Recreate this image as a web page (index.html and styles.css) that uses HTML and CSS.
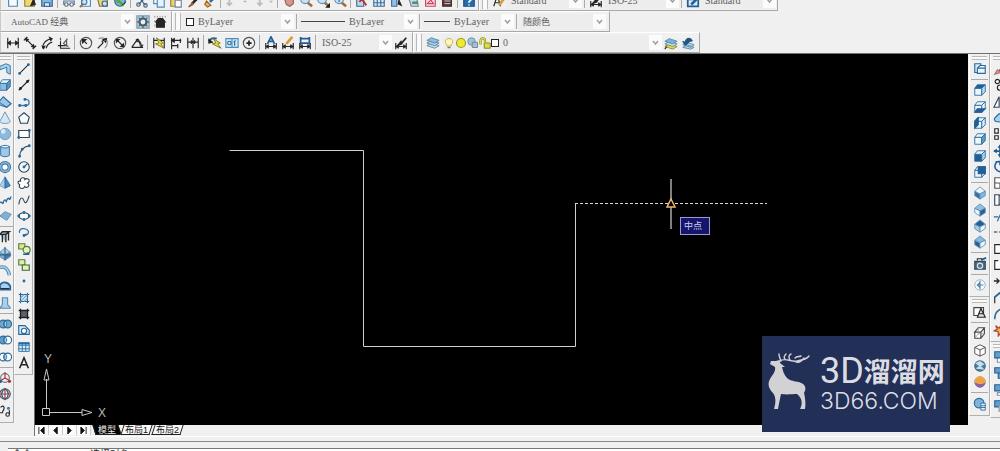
FILE: index.html
```html
<!DOCTYPE html>
<html lang="zh-CN">
<head>
<meta charset="utf-8">
<title>AutoCAD 经典</title>
<link rel="stylesheet" href="styles.css">
</head>
<body>
<header class="bars">
  <div class="bar-row bar-row-top">
    <div class="bar bar-first" data-tools="new open save | plot preview publish globe | cut copy paste brush match | undo more redo more | pan zoom zoomwin zoomprev | props center palette sheet markup calc | help"></div>
    <div class="bar">
      <i class="grip"></i>
      <span class="tools" data-tools="textstyle"></span>
      <span class="combo combo-style"><select aria-label="文字样式"><option>Standard</option></select></span>
      <i class="sep"></i>
      <span class="tools" data-tools="dimbrush"></span>
      <span class="combo combo-style"><select aria-label="标注样式"><option>ISO-25</option></select></span>
      <i class="sep"></i>
      <span class="tools" data-tools="tablestyle"></span>
      <span class="combo combo-style"><select aria-label="表格样式"><option>Standard</option></select></span>
    </div>
  </div>
  <div class="bar-row">
    <div class="bar bar-first">
      <span class="combo combo-space"><select aria-label="工作空间"><option>AutoCAD 经典</option></select></span>
      <span class="tools" data-tools="gear house"></span>
    </div>
    <div class="bar">
      <i class="grip"></i>
      <span class="combo combo-color"><i class="swatch"></i><select aria-label="颜色"><option>ByLayer</option></select></span>
      <i class="sep"></i>
      <span class="combo combo-line"><i class="sample sample-long"></i><select aria-label="线型"><option>ByLayer</option></select></span>
      <i class="sep"></i>
      <span class="combo combo-weight"><i class="sample"></i><select aria-label="线宽"><option>ByLayer</option></select></span>
      <i class="sep"></i>
      <span class="combo combo-plot"><select aria-label="打印样式"><option>随颜色</option></select></span>
    </div>
  </div>
  <div class="bar-row">
    <div class="bar bar-first">
      <span class="tools" data-tools="dimlin dimali dimarc dimord | dimrad dimjog dimdia dimang | quick baseline continue | tolerance frame centermark | dimedit dimtext dimupdate |"></span>
      <span class="combo combo-dim"><select aria-label="当前标注样式"><option>ISO-25</option></select></span>
      <span class="tools" data-tools="dimbrush"></span>
    </div>
    <div class="bar">
      <i class="grip"></i>
      <span class="tools" data-tools="layers"></span>
      <span class="combo combo-layer"><span class="states" data-icons="bulb sun freeze lock"></span><i class="swatch"></i><select aria-label="图层"><option>0</option></select></span>
      <span class="tools" data-tools="laycur layprev"></span>
    </div>
  </div>
</header>

<main class="work">
  <div class="dock dock-left-a">
    <div class="vbar"><i class="vgrip"></i><div data-tools="polysolid box wedge cone sphere cylinder torus pyramid helix plane | extrude presspull sweep revolve loft | union subtract intersect | move3d rotate3d align3d"></div></div>
  </div>
  <div class="dock dock-left-b">
    <div class="vbar"><i class="vgrip"></i><div data-tools="line xline pline polygon rect arc circle cloud spline ellipse ellarc insert block point hatch gradient region table mtext"></div></div>
  </div>
  <section class="view">
    <div class="canvas">
      <svg class="drawing" aria-label="图形">
        <path d="M194.500 96.500H328.500V292.500H540.500V149.500" fill="none" stroke="#d0d0d0"/>
        <path d="M540 149.500H732" stroke="#d8d8d8" stroke-dasharray="3 2"/>
        <path d="M636 125V175" stroke="#808080" stroke-width="2"/>
        <path d="M636 145L640 153H632Z" fill="#000" stroke="#f2b66c" stroke-width="1.500"/>
      </svg>
      <svg class="ucs" viewBox="0 0 70 70" aria-label="UCS">
        <path d="M4.500 57.500h7v7h-7zM8.500 57V28M12 61.500H44M8.500 18L11 29H6ZM54 61.500L44 58.500V64.500Z" fill="none" stroke="#c8c8c8"/>
        <text x="6" y="12">Y</text><text x="60" y="66">X</text>
      </svg>
      <span class="snap-tip">中点</span>
    </div>
    <nav class="tabs">
      <button class="nav-btn" aria-label="第一个"><svg viewBox="0 0 10 8"><path d="M2 0v8M8 0L4 4L8 8Z"/></svg></button>
      <button class="nav-btn" aria-label="上一个"><svg viewBox="0 0 10 8"><path d="M7 0L3 4L7 8Z"/></svg></button>
      <button class="nav-btn" aria-label="下一个"><svg viewBox="0 0 10 8"><path d="M3 0L7 4L3 8Z"/></svg></button>
      <button class="nav-btn" aria-label="最后一个"><svg viewBox="0 0 10 8"><path d="M8 0v8M2 0L6 4L2 8Z"/></svg></button>
      <span class="tab-list"><button class="tab tab-on">模型</button><button class="tab">布局1</button><button class="tab">布局2</button></span>
    </nav>
    <aside class="brand">
      <svg class="deer" viewBox="0 0 42 58" aria-hidden="true">
        <path fill="#d2d2d4" d="M12 7C9 8 6 8 3 8L2 11L7 14C8 19 4 22 2 26C-1 31 1 36 5 40C8 44 8 49 6 56H10C11 50 12 46 13 41C19 42 25 41 29 41C34 45 35 50 32 56H37C38 50 37 44 36 40C38 37 38 33 35 31C31 28 23 29 19 25C16 22 15 18 14 14L17 14L12 10Z"/>
        <path fill="none" stroke="#d2d2d4" stroke-width="1.400" stroke-linecap="round" d="M12 8C17 4 22 9 29 8C35 7 39 6 41 3M13 8C12 5 11 4 11 1M17 6C15 4 17 2 18 1M22 7C20 4 21 2 23 1M27 5C29 3 31 4 33 3M26 8C30 11 34 8 36 5"/>
      </svg>
      <div class="brand-text">
        <div class="brand-name"><span class="brand-latin">3D</span>溜溜网</div>
        <div class="brand-site">3D66.COM</div>
      </div>
    </aside>
  </section>
  <div class="dock dock-right-a">
    <div class="vbar"><i class="vgrip"></i><div data-tools="named | vtop vbottom vleft vright vfront vback | isw ise ine inw | camera | previous"></div></div>
    <div class="vbar"><i class="vgrip"></i><div data-tools="wire2d | wire3d hidden realistic conceptual | styles"></div></div>
  </div>
  <div class="dock dock-right-b">
    <div class="vbar"><i class="vgrip"></i><div data-tools="erase copyobj mirror offset array move rotate scale stretch trim extend break1 break2 join chamfer fillet explode"></div></div>
    <div class="vbar"><i class="vgrip"></i><div data-tools="front back above below"></div></div>
  </div>
</main>

<footer class="command">
  <div class="command-line"><span>命令</span><span>选择对象</span></div>
</footer>
<script src="app.js"></script>
</body>
</html>
```

FILE: styles.css
```css
* { box-sizing: border-box; }

body {
  margin: 0;
  min-height: 100vh;
  display: flex;
  flex-direction: column;
  overflow: hidden;
  background: #f0f0f0;
  color: #606060;
  font: 10px/12px "Liberation Serif", "Noto Sans CJK SC", serif;
}

button, select {
  margin: 0;
  padding: 0;
  border: 0;
  background: none;
  color: inherit;
  font: inherit;
}

svg { display: block; }

/* horizontal toolbars */
.bars { border-bottom: 1px solid #707070; }
.bar-row { display: flex; height: 21px; align-items: stretch; }
.bar-row-top { height: 11px; align-items: flex-end; overflow: hidden; }
.bar {
  display: flex;
  align-items: center;
  height: 21px;
  flex: none;
  padding: 0 3px 0 1px;
  border: 1px solid;
  border-color: #fff #a8a8a8 #a8a8a8 #fff;
}
.bar-first { padding-left: 3px; border-left-color: #c8c8c8; }
.bar-row-top .bar { padding-right: 1px; }
.tools { display: flex; align-items: center; }
.tool {
  display: flex;
  flex: none;
  align-items: center;
  justify-content: center;
  width: 17px;
  height: 16px;
}
.tool svg { width: 14px; height: 14px; }
.tool-more { width: 9px; }
.tool-more svg { width: 8px; }
.sep {
  flex: none;
  width: 1px;
  height: 15px;
  margin: 0 2px;
  background: #aaa;
}
.grip {
  flex: none;
  width: 6px;
  height: 17px;
  margin: 0 2px 0 1px;
  border: solid #b8b8b8;
  border-width: 0 1px;
  background: #fafafa;
}

.combo {
  display: flex;
  align-items: center;
  height: 16px;
  background: #ededed;
}
.combo select {
  flex: 1;
  min-width: 0;
  height: 16px;
  padding: 0 14px 0 4px;
  appearance: none;
  outline: 0;
}
.combo .chevron {
  width: 13px;
  height: 15px;
  margin-left: -13px;
  background: #fbfbfb;
  pointer-events: none;
}
.combo-style { width: 75px; }
.combo-space { width: 130px; font-size: 9px; }
.combo-space select { padding-left: 7px; }
.combo-color { width: 111px; }
.combo-line { width: 118px; }
.combo-weight { width: 92px; }
.combo-plot { width: 87px; font-size: 9px; }
.combo-dim { width: 74px; }
.combo-layer { width: 219px; margin-left: 2px; }
.swatch {
  flex: none;
  width: 8px;
  height: 8px;
  margin-left: 3px;
  border: 1px solid #222;
  background: #fff;
}
.combo-layer .swatch { margin-left: 0; }
.sample { flex: none; width: 26px; height: 1px; margin-left: 2px; background: #444; }
.sample-long { width: 44px; }
.states { display: flex; }
.states svg { width: 12px; height: 12px; }

/* docked toolbars */
.work { display: flex; flex: 1; }
.dock { flex: none; overflow: hidden; }
.dock-left-a { display: flex; justify-content: flex-end; align-items: flex-start; width: 14px; }
.dock-left-b { width: 20px; }
.dock-right-a { width: 22px; }
.dock-right-b { width: 10px; }
.vbar {
  width: 19px;
  padding: 2px 0 3px;
  border: solid;
  border-width: 0 1px 1px 1px;
  border-color: #fff #b0b0b0 #b0b0b0 #fff;
}
.dock-right-a .vbar { margin-left: 1px; width: 21px; }
.vgrip {
  display: block;
  height: 4px;
  margin: 0 2px 1px;
  border: solid #b8b8b8;
  border-width: 1px 0;
  background: #fafafa;
}
.vbar > div { display: flex; flex-direction: column; align-items: center; }
.vbar .tool:nth-of-type(3n) { height: 17px; }
.vbar .sep { width: 17px; height: 1px; margin: 2px 0; }

/* drawing area */
.view {
  position: relative;
  display: flex;
  flex: 1;
  flex-direction: column;
  min-width: 0;
  border-left: 1px solid #707070;
}
.canvas { position: relative; flex: 1; overflow: hidden; background: #000; }
.drawing { width: 100%; height: 100%; position: absolute; }
.ucs { position: absolute; left: 3px; bottom: 4px; width: 70px; height: 70px; }
.ucs text { fill: #b8b8b8; font: 12px "Liberation Sans", sans-serif; }
.snap-tip {
  position: absolute;
  left: 645px;
  top: 163px;
  padding: 2px 7px 2px 3px;
  border: 1px solid #9a9ad0;
  background: #15156b;
  color: #d0d0f0;
  font-size: 9px;
}

.tabs { display: flex; align-items: stretch; height: 11px; padding-bottom: 1px; color: #111; }
.tab-list { display: flex; padding-left: 2px; }
.nav-btn {
  display: flex;
  align-items: center;
  justify-content: center;
  width: 14px;
  border-right: 1px solid #ccc;
  background: #fafafa;
}
.nav-btn svg { width: 9px; height: 7px; fill: #111; stroke: #111; }
.tab {
  position: relative;
  z-index: 0;
  width: 31px;
  font: 9px/10px "Liberation Sans", "Noto Sans CJK SC", sans-serif;
}
.tab-on { width: 28px; color: #eee; }
.tab::before {
  content: "";
  position: absolute;
  z-index: -1;
  inset: 0 1px;
  border: 1px solid #222;
  border-top: 0;
  background: #f8f8f8;
  transform: skewX(-18deg);
}
.tab-on::before { background: #000; transform: skewX(18deg); }

.brand {
  position: absolute;
  right: 18px;
  bottom: 4px;
  display: flex;
  gap: 10px;
  width: 188px;
  height: 96px;
  padding: 17px 4px 0 6px;
  background: #222f57;
  color: #dcdde2;
}
.deer { flex: none; width: 42px; height: 58px; }
.brand-text { white-space: nowrap; }
.brand-name { display: flex; align-items: center; height: 36px; font: 700 27px/36px "Noto Sans CJK SC", sans-serif; }
.brand-latin { font: 36px/36px Roboto, sans-serif; }
.brand-site { font: 300 23px/24px Inter, sans-serif; }

/* command window */
.command { flex: none; height: 15px; border-top: 1px solid #fff; overflow: hidden; }
.command::before { content: ""; display: block; height: 1px; margin-top: 4px; background: #888; }
.command-line {
  display: flex;
  gap: 58px;
  margin: 6px 0 0 8px;
  padding-left: 4px;
  border-top: 1px solid #777;
  background: #fff;
  color: #333;
  line-height: 12px;
}
```

FILE: app.js
```js
const K = '#252525', B = '#276a9f', L = '#a9d0ec', D = '#235f96', W = '#eef6fc', Y = '#e8df3c', G = '#8b9298';

const p = (d, stroke = K, fill = 'none', w = 1.3) =>
  `<path d="${d}" stroke="${stroke}" fill="${fill}" stroke-width="${w}"/>`;
const c = (x, y, r, stroke = K, fill = 'none', w = 1.3) =>
  `<circle cx="${x}" cy="${y}" r="${r}" stroke="${stroke}" fill="${fill}" stroke-width="${w}"/>`;
const dots = (...xy) => xy.map(([x, y]) => c(x, y, 1, B, B)).join('');
const cube = (front, top, side) =>
  p('M2 6H10V14H2Z', B, front, 1) + p('M2 6L5 2H14L10 6Z', B, top, 1) + p('M10 6L14 2V10L10 14Z', B, side, 1);
const iso = (left, top, right) =>
  p('M2 6L8 9V15L2 11Z', '#5f8fb8', left, 1) + p('M8 1L14 6L8 9L2 6Z', '#5f8fb8', top, 1) + p('M14 6L8 9V15L14 11Z', '#5f8fb8', right, 1);
const page = p('M3 1H13V14H3Z', '#4f86b3', '#f4faff');
const lens = c(7, 6, 5, '#6d8fae', '#c5e2f6') + p('M10 10L15 14', '#a06c3c', 'none', 3);
const dimBase = p('M2 8V15M14 8V15M2 12H14', K) + p('M2 12L5 10V14ZM14 12L11 10V14Z', K, K, 1);
const rings = (a, b) => c(6, 8, 4.5, B, a) + c(11, 8, 4.5, B, b) + p('M8.500 4.500C10.500 7 10.500 9 8.500 11.500C6.500 9 6.500 7 8.500 4.500Z', B, L, 1);

const icons = {
  new: page,
  open: p('M2 5H13V14H2Z', '#9b8530', '#efd871') + p('M12 6L9 13L14 12Z', K, K),
  save: p('M2 2H14V14H2Z', '#315f90', '#83b8df') + p('M5 10H11V14H5Z', '#315f90', '#e0eefa'),
  plot: p('M2 8H14V12H2Z', '#64788f', '#dce7f0') + c(5, 12, 2, '#51677f', '#fff') + c(11, 12, 2, '#51677f', '#fff'),
  preview: page + c(6, 9, 3, '#4b779d', '#c5e2f6') + p('M4 12L1 15', '#99683b', 'none', 2),
  publish: p('M2 6H13V14H4Z', '#8a7835', '#ead579') + c(10, 11, 3, '#3d6892', '#c2dff4'),
  globe: c(8, 8, 6, '#2b6392', '#76b7df') + p('M4 9C8 6 9 12 12 13', '#5ea33e', 'none', 3) + p('M10 13L15 9', K, 'none', 1),
  cut: p('M3 2L12 13M13 3L4 12', '#3e617e') + c(4, 12, 2, '#3e617e') + c(12, 13, 2, '#3e617e'),
  copy: p('M2 2H9V11H2Z', '#5688b2', '#f6fbff') + p('M6 5H14V15H6Z', '#5688b2', '#e4f3ff'),
  paste: p('M2 3H12V14H2Z', '#92803a', '#e9d374') + p('M7 7H14V15H7Z', '#708395', '#fff'),
  brush: p('M14 4L7 11', K, 'none', 3) + p('M7 10L3 15L8 12Z', '#a05a27', '#c57e45'),
  match: p('M14 3L8 9', B, 'none', 3) + p('M4 8L9 13L5 15L2 12Z', '#9a6828', '#edb34e'),
  undo: p('M5 6V13M2 10L5 13L8 10', '#bcbcbc', 'none', 2),
  redo: p('M10 6V13M7 10L10 13L13 10', '#bcbcbc', 'none', 2),
  more: p('M5 8H11L8 11Z', '#b8b8b8', '#b8b8b8'),
  pan: p('M3 6L5 12L9 14L13 11V7L10 5L5 3Z', '#9c625a', '#d4978f'),
  zoom: lens, zoomwin: lens + p('M12 15H16V11Z', K, K), zoomprev: lens + p('M4 6H10M7 3V9', B),
  props: p('M2 4H10V14H2Z', '#46688e', '#bdd8ec') + p('M5 9L8 6L13 13', '#ad342b', 'none', 2),
  center: p('M2 2H14V14H2ZM2 6H14M2 10H14M6 2V14M10 2V14', '#426b92', '#d7ebfa'),
  palette: p('M3 2H9V14H3Z', '#426b92', '#8fc0e5') + p('M11 6L14 13L10 11', K, K),
  sheet: p('M3 4H12L14 14H6Z', '#70879a', '#c5ddea') + p('M7 10H14', '#5c8e6a', 'none', 3),
  markup: p('M3 3H14V14H3Z', '#cc4161', '#f9dfe5') + p('M5 11L9 7L12 11Z', '#cc4161'),
  calc: p('M3 2H13V14H3Z', '#442a2a', '#573838') + p('M5 8H12M5 11H12', '#ddd', 'none', 1),
  help: p('M2 2H14V14H2Z', '#164f88', '#246cac') + p('M6 5C7 3 11 4 10 7L8 9V10M8 12V13', '#fff', 'none', 2),
  textstyle: p('M2 14L6 2L10 14M4 10H9', K) + p('M14 5L8 13', '#d59e3b', 'none', 3),
  tablestyle: p('M2 2H14V14H2ZM2 6H14', D, '#d8ebfa', 2) + p('M13 5L6 12', D, 'none', 3),
  gear: p('M1 1H15V15H1Z', '#7898aa', '#bcd2df') + c(8, 8, 4, '#475d6d', '#e8eef1', 2.500) + p('M8 1V4M8 12V15M1 8H4M12 8H15M3 3L5 5M11 11L13 13M3 13L5 11M11 5L13 3', '#475d6d'),
  house: p('M2 1V3M5 1V3M8 1V3M11 1V3M14 1V3M2 6V8M2 11V13', '#888', 'none', 1) + p('M3 8L6 4H11L14 8H13V14H4V8Z', K, K),
  dimlin: p('M2 2V14M14 2V14M2 8H14') + p('M2 8L5 6V10ZM14 8L11 6V10Z', K, K),
  dimali: p('M5 1L1 5M15 11L11 15M3 3L13 13', K, 'none', 1.500) + p('M3 3L6 4L4 6ZM13 13L10 12L12 10Z', K, K),
  dimarc: p('M3 14C3 8 7 4 14 3M7 14C8 10 10 8 14 7', K) + p('M2 11L4 15L6 11M10 1L14 3L12 6', K, K, 1),
  dimord: p('M4 6V14H15M1 11H10', K) + p('M4 2V5M7 9L12 3M8 9L13 12M11 5V12', '#555', 'none', 1.300),
  dimrad: c(8, 8, 6.500, '#555') + p('M4 4L9 9', K) + p('M4 4V8L8 4Z', K, K),
  dimjog: p('M3 3C12 0 16 7 10 14', G) + p('M2 14L8 8L7 6L11 4M8 4L12 3L11 7Z', K),
  dimdia: c(8, 8, 6.500, '#555') + p('M4 4L12 12') + p('M4 4H7L4 7ZM12 12H9L12 9Z', K, K),
  dimang: p('M2 13H15M2 13L9 3', K) + p('M8 4C12 5 13 9 13 13M10 4L7 4L8 7ZM11 10L13 13L15 10', K, K, 1),
  quick: p('M2 2V14M14 2V14M2 5H14') + p('M5 2L13 8L10 9L14 14L4 9L8 8Z', '#777323', Y, 1),
  baseline: p('M3 2V15M3 5H14M3 11H10M13 3V8M10 9V14') + p('M3 5L6 3V7Z', K, K),
  continue: p('M2 2V14M8 2V14M14 2V14M2 7H14') + p('M8 7L6 5V9ZM8 7L10 5V9Z', K, K, 1),
  tolerance: p('M1 6C3 2 7 2 10 3', D, 'none', 2) + p('M1 4V8L5 7Z', K, K) + p('M6 3L14 8L11 9L15 14L5 9L9 8Z', '#777323', Y, 1),
  frame: p('M1 3H15V13H1ZM8 3V13', '#4f8db8', '#d3eafa') + c(5, 8, 2, B) + p('M11 6V11M10 7L12 5', B),
  centermark: c(8, 8, 6.500, '#555') + p('M5 8H11M8 5V11', K, 'none', 2),
  dimedit: p('M4 9L8 1L12 9M6 6H10', D, 'none', 2) + dimBase,
  dimtext: p('M13 1L6 9', '#d79c33', 'none', 3) + dimBase,
  dimupdate: p('M3 1V10M13 1V10M3 3H13M3 8H13', D, 'none', 2) + dimBase,
  dimbrush: p('M14 2L8 9', K, 'none', 2) + p('M8 6L4 11L9 9Z', K, K) + dimBase,
  layers: p('M1 11L6 8L15 11L10 14Z', '#68869c', '#c5d8e4', 1) + p('M1 8L6 5L15 8L10 11Z', '#5686a8', '#b2d1e6', 1) + p('M1 5L6 2L15 5L10 8Z', '#5686a8', '#8ebddd', 1),
  laycur: p('M1 12L6 9L15 12L10 15Z', '#8d852d', Y, 1) + p('M1 9L6 6L15 9L10 12Z', '#5686a8', '#c8e1f0', 1) + p('M1 6L6 3L15 6L10 9Z', '#5686a8', '#7eb2d7', 1) + p('M1 15L3 12', K),
  layprev: p('M2 13L7 10L15 13L11 15ZM2 10L7 7L15 10L11 13Z', '#5686a8', '#b9d7ea', 1) + p('M13 6C10 0 5 3 5 8M2 6L5 10L9 7', '#255582', '#255582', 1.500),
  bulb: p('M5 10C1 6 4 2 8 2S15 6 11 10V12H5Z', '#b3a347', '#fff7ae', 1) + p('M6 14H10', '#777', 'none', 2),
  sun: c(8, 8, 6, '#999b28', '#f2e92e', 1.500),
  freeze: c(6, 6, 5, '#6e94ad', '#9bc4dd') + p('M7 7H14V14H7Z', '#72889a', '#a8bfce'),
  lock: p('M7 8H15V15H7Z', '#8a8b23', '#dadd45') + p('M2 10V4C3 1 8 1 8 5V8', '#8a8b23', 'none', 3) + p('M2 10V4C3 1 8 1 8 5V8', '#dadd45', 'none', 1.500),
  polysolid: p('M2 5L9 2L14 4V14L10 12V6L2 9Z', B, L, 1), box: cube('#8bbbe0', W, '#5795c5'),
  wedge: p('M1 8L6 2L15 10L10 14L1 11Z', B, '#9dc6e5') + p('M1 8L10 14', B, 'none', 1),
  cone: p('M8 1L2 12C3 15 13 15 14 12Z', '#6a8fae', '#d3e6f4', 1), sphere: c(8, 8, 6.500, '#6a9ac1', '#8fb9dc', 1) + c(6, 5, 2, '#d7eafa', '#d7eafa'),
  cylinder: p('M3 3V13C5 15 11 15 13 13V3Z', B, '#9ec8e7', 1) + p('M3 3C5 1 11 1 13 3C11 5 5 5 3 3Z', B, W, 1),
  torus: c(8, 8, 5, '#356f9f', '#fff', 4) + c(8, 8, 5, '#82b4da', 'none', 2), pyramid: p('M8 1L2 11L8 14Z', '#6ca2cc', L, 1) + p('M8 1L14 11L8 14Z', B, '#4b86b6', 1),
  helix: p('M1 13C4 6 6 16 6 10C10 4 9 14 10 8C14 2 12 12 15 4', B, 'none', 1.500), plane: p('M2 8L8 3L15 6L10 13Z', '#668cab', '#7fb0d9', 1),
  extrude: p('M2 5H9V14M5 5V14M12 2V12M2 5L5 2H13L9 5', K, '#9cbfd9', 1.500), presspull: iso('#7babd0', L, '#4b7ca8') + p('M8 0V15M1 9H15', '#35617f'),
  sweep: p('M2 5C9 3 12 8 13 14', '#5487af', 'none', 4) + p('M2 5C9 3 12 8 13 14', L, 'none', 2), revolve: p('M2 8C4 2 11 3 14 8V12H3Z', B, L, 2) + p('M3 11H13', K),
  loft: p('M5 2H11V9C11 12 14 11 14 14H2C3 12 5 12 5 9Z', '#5d8bae', L), union: rings('#72aac6', '#72aac6'), subtract: rings('#65a0c4', '#fff'), intersect: rings('#fff', '#fff'),
  move3d: c(8, 8, 5, '#777') + p('M8 8V1M8 8L1 12M8 8L15 12', '#a92e3c') + c(3, 12, 1, D, D) + c(13, 12, 1, '#a92e3c', '#a92e3c'),
  rotate3d: c(8, 8, 6, '#555') + p('M2 8H14M8 1V15', '#b13343') + p('M8 2C3 5 3 11 8 14M8 2C13 5 13 11 8 14', '#345a80'),
  align3d: p('M3 4C6 0 9 4 5 9M2 10H6', K) + c(12, 5, 1, D) + c(11, 12, 2, K) + p('M13 7V11', K),
  line: p('M3 13L13 3') + dots([3, 13], [13, 3]), xline: p('M2 14L14 2') + c(4, 12, 1, K, K) + c(12, 4, 1, K, K),
  pline: p('M3 12H10C15 12 15 5 10 5H8', '#3f79a8', 'none', 1.500) + dots([3, 12], [10, 12], [9, 5]),
  polygon: p('M8 2L14 7L12 14H4L2 7Z', '#345', '#f6fafb'), rect: p('M2 4H14V12H2Z', '#345', '#fff') + dots([2, 12], [14, 4]),
  arc: p('M3 14C3 8 7 3 14 2', '#345') + dots([3, 14], [6, 6], [14, 2]), circle: c(8, 8, 6, '#345', '#f2f8fb') + p('M8 8L12 4', B) + dots([8, 8]),
  cloud: p('M4 6C3 1 9 1 9 4C13 1 16 6 12 8C16 11 11 15 9 12C7 16 1 14 3 10C0 8 1 5 4 6Z', '#345', '#fff'),
  spline: p('M2 13C4 2 7 6 8 9C10 14 12 9 14 3', '#345'), ellipse: p('M2 8C3 3 13 3 14 8C13 13 3 13 2 8Z', '#345', '#f6fafb') + dots([2, 8], [14, 8], [8, 4], [8, 12]),
  ellarc: p('M3 9C1 4 10 2 13 7C14 10 11 12 8 12M8 12L11 10', '#3c759f', 'none', 1.500) + dots([8, 12]),
  insert: p('M2 2H9V8H2Z', '#567f38', '#d5e98f') + c(11, 9, 4, '#4d7d35', '#e8f2bd') + p('M7 14H14M12 12L14 14', D, 'none', 1.500),
  block: p('M2 2H9V8H2Z', '#567f38', '#e2efaa') + p('M6 8H14V14H6Z', '#3b683b', '#e8f2bd'), point: c(8, 8, 1, B, B),
  hatch: p('M2 4H14M2 12H14M4 2V14M12 2V14', '#27608f', '#d7ecfa') + p('M4 8L8 4M4 12L12 4M8 12L12 8', '#6ea8d3'),
  gradient: p('M4 4H12V12H4Z', '#345', '#59616a') + p('M2 4H14M2 12H14M4 2V14M12 2V14', '#222', 'none', 1.500),
  region: p('M2 3H9L14 8V13H2Z', B, '#d7ecfa') + c(8, 9, 3, B, '#fff'), table: p('M2 3H14V13H2ZM2 6H14M2 10H14M6 3V13M10 3V13', B, '#d7ecfa', 1) + p('M2 4H14', B, 'none', 2),
  mtext: p('M3 14L8 2L13 14M5 10H11', K, 'none', 1.800),
  named: p('M2 2H9V12H2Z', B, '#d7ecfa') + p('M5 7L8 4H14V13H5ZM5 7H14', B, W), vtop: cube(W, D, '#b8d9f0'), vbottom: cube(W, W, W) + p('M2 14L5 10H14L10 14Z', D, D),
  vleft: cube(W, W, '#d6eaf8') + p('M2 6L6 2V10L2 14Z', D, D), vright: cube(W, W, '#5f9bc8'), vfront: cube(D, W, L), vback: cube(W, W, W) + p('M6 2H14V10H6Z', D, D),
  isw: iso('#356f9f', W, '#86b8dd'), ise: iso(W, '#90bfdf', D), ine: iso('#a9cce5', D, W), inw: iso(D, '#8bb9da', W),
  camera: p('M2 5H14V14H2Z', '#33475a', '#52697b') + c(8, 10, 3, '#d6e4ed', '#55738c') + p('M5 4V2H10V4', K) + p('M10 3L15 1', D, 'none', 2),
  previous: c(8, 8, 6, '#9caebc', '#f8fbfd', 1) + p('M5 8H12M8 5L5 8L8 11M8 3V13', '#4b83ae'), wire2d: p('M1 3H12V12H1Z', '#444', '#fff') + p('M5 14L9 4L14 14ZM7 10H12', K, '#ddd'),
  wire3d: p('M2 7H9V14H2ZM2 7L6 2H13L9 7ZM13 2V9L9 14', '#444', '#fff', 1.300) + p('M6 2V9H13M2 14L6 9', '#999', 'none', 1), hidden: p('M2 5L8 2L14 5V12L8 15L2 12ZM2 5L8 8L14 5M8 8V15', '#444', '#fff', 1),
  realistic: c(8, 8, 6, '#496b86', '#467f9f') + p('M4 5L8 3L12 6L8 8ZM4 11L8 8L12 12', '#c8dfec', '#c8dfec'),
  conceptual: c(8, 8, 6, '#936184', '#8262ac', 1) + p('M2 8C2 0 14 0 14 8C10 11 7 10 2 8Z', '#f1b157', '#f1a33b', 1), styles: c(7, 7, 5.500, B, '#81b4d6') + p('M9 7H14V15H9ZM9 10H14M9 12H14', B, W, 1),
  erase: p('M14 3L7 10', '#8b4d43', 'none', 2) + p('M2 14L5 9L9 12Z', '#b56e68', '#d99a93'), copyobj: c(5, 4, 2.500) + c(8, 11, 3), mirror: p('M7 2V14H1Z', '#345', '#fff') + p('M9 2V14H15Z', B, L),
  offset: p('M3 12C-1 8 4 7 5 5C8 1 14 4 12 8C16 9 14 13 12 13Z', B, L), array: p('M2 2H6V7H2ZM9 2H13V7H9ZM2 10H6V14H2ZM9 10H13V14H9Z', K, '#fff'),
  move: p('M8 1V15M1 8H15', D, 'none', 2) + p('M8 1L6 4H10ZM8 15L6 12H10ZM1 8L4 6V10Z', D, D, 1), rotate: p('M9 2C2 0 0 9 5 12C8 15 14 12 14 8M3 2H8V6', D, 'none', 1.800),
  scale: p('M2 2H14V14H2ZM2 8H8V14', '#555', '#fff'), stretch: p('M2 2H7V14H2ZM7 3H14V13H7', '#345', '#fff'), trim: p('M1 9H6M5 14L10 3M8 9H14', B), extend: p('M1 8H5M7 8H9M11 8H15', K),
  break1: p('M8 3H2V13H14V3', K, '#fff'), break2: p('M6 3H2V13H14V3H10', K, '#fff'), join: p('M1 8H7M4 5L7 8L4 11M15 8H9', K, 'none', 1.500),
  chamfer: p('M2 14V7L8 2H14', K) + p('M2 7L8 2', B, 'none', 2), fillet: p('M2 14C2 5 7 2 14 2', B, 'none', 1.800),
  explode: p('M3 3L7 6L10 1V6L15 5L11 9L14 13L9 11L6 15V10L1 9L5 7Z', '#b44434', '#f1bd42'),
  front: p('M5 6H14V14H5Z', G, '#fff') + p('M2 2H10V9H2Z', D, '#659fc9'), back: p('M6 6H14V14H6Z', D, '#659fc9') + p('M2 2H9V8H2Z', D, '#659fc9'),
  above: p('M2 2H12V9H2Z', D, '#659fc9') + p('M5 11H14V14H5Z', G, '#fff'), below: p('M2 2H12V9H2Z', D, '#659fc9') + p('M7 7H14V14H7Z', G, '#fff'),
};

const glyph = name => `<svg viewBox="0 0 16 16" aria-hidden="true">${icons[name]}</svg>`;

document.querySelectorAll('[data-tools]').forEach(host => {
  host.innerHTML = host.dataset.tools.split(' ').map(name => name === '|'
    ? '<i class="sep"></i>'
    : `<button class="tool tool-${name}" aria-label="${name}">${glyph(name)}</button>`).join('');
});
document.querySelectorAll('[data-icons]').forEach(host => {
  host.innerHTML = host.dataset.icons.split(' ').map(glyph).join('');
});
document.querySelectorAll('.combo').forEach(combo => {
  combo.insertAdjacentHTML('beforeend',
    '<svg class="chevron" viewBox="0 0 13 15"><path d="M4 6L6.500 9L9 6" fill="none" stroke="#a0a0a0" stroke-width="1.500"/></svg>');
});
```
